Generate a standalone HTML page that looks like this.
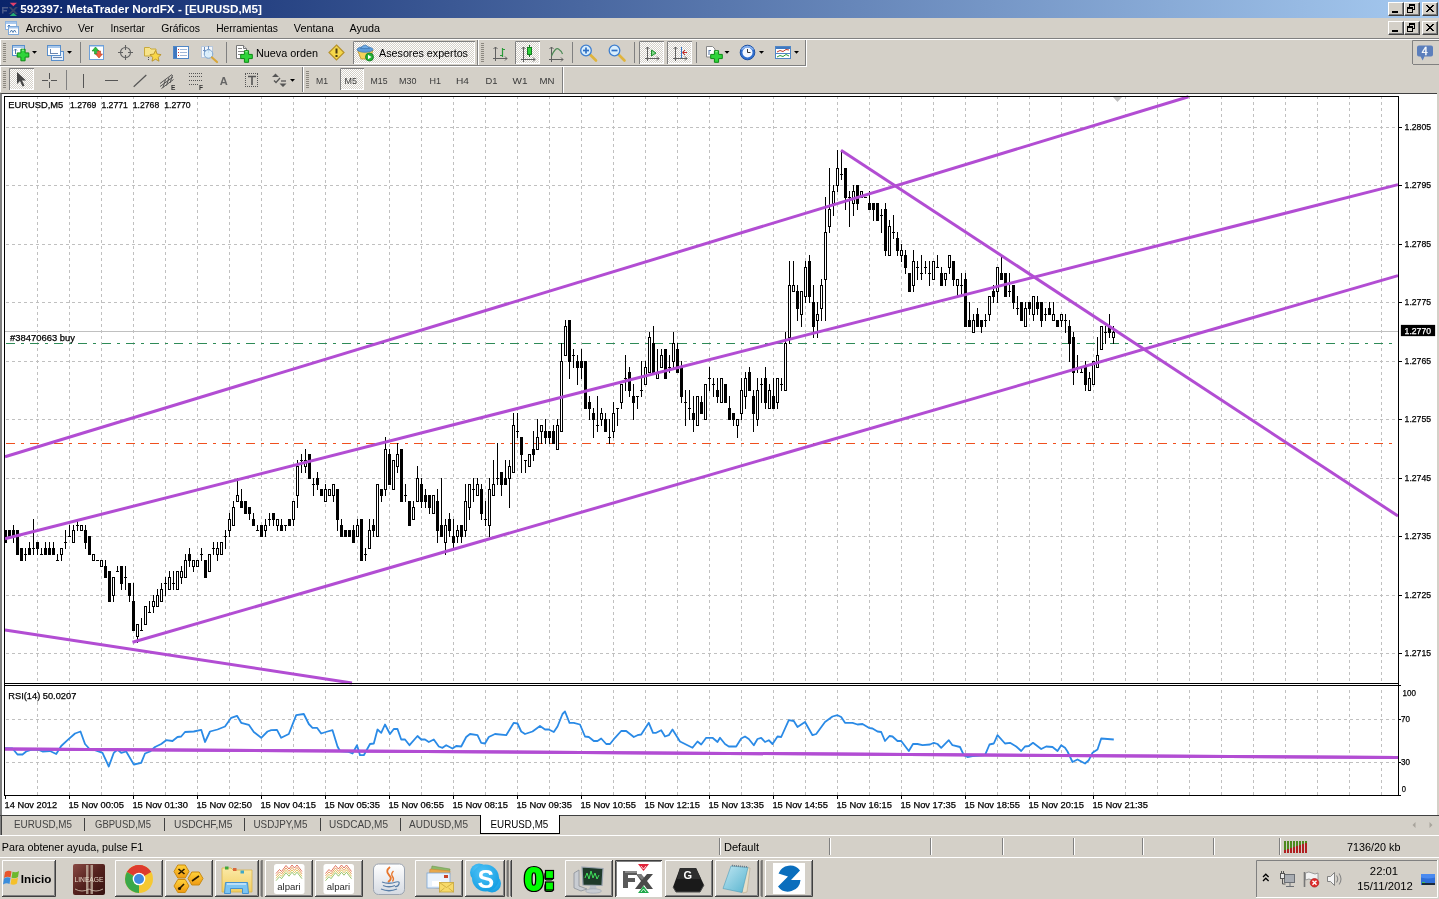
<!DOCTYPE html><html><head><meta charset="utf-8"><title>592397: MetaTrader NordFX - [EURUSD,M5]</title>
<style>

html,body{margin:0;padding:0;}
body{width:1439px;height:899px;overflow:hidden;background:#D4D0C8;font-family:"Liberation Sans",sans-serif;font-size:11px;color:#000;position:relative;}
.abs{position:absolute;}
.t{position:absolute;white-space:nowrap;line-height:1;}
#title{left:0;top:0;width:1439px;height:18px;background:linear-gradient(to right,#0A246A 0%,#A6CAF0 100%);}
#title .cap{left:20px;top:3px;color:#fff;font-weight:bold;font-size:12px;letter-spacing:0px;}
.wb{position:absolute;width:14px;height:12px;background:#D4D0C8;border:1px solid;border-color:#fff #404040 #404040 #fff;box-shadow:inset -1px -1px 0 #808080;}
.menu{top:22px;font-size:11px;}
.tb{position:absolute;border:1px solid;border-color:#fff #808080 #808080 #fff;}
.grip{position:absolute;width:3px;border-left:1px solid #fff;border-right:1px solid #808080;}
.sep{position:absolute;width:0;border-left:1px solid #808080;border-right:1px solid #fff;}
.pressed{position:absolute;border:1px solid;border-color:#808080 #fff #fff #808080;background-color:#ECEAE6;background-image:linear-gradient(45deg,#fff 25%,transparent 25%,transparent 75%,#fff 75%),linear-gradient(45deg,#fff 25%,transparent 25%,transparent 75%,#fff 75%);background-size:2px 2px;background-position:0 0,1px 1px;}
.tf{top:75px;font-size:10px;color:#333;}
.tab{top:818px;font-size:11px;color:#222;}
.tsep{position:absolute;top:818px;width:1px;height:13px;background:#404040;}
.sb{top:841px;font-size:11px;}
.ssep{position:absolute;top:838px;width:0;height:17px;border-left:1px solid #808080;border-right:1px solid #fff;}
.tbtn{position:absolute;top:860px;height:35px;border:1px solid;border-color:#fff #404040 #404040 #fff;box-shadow:inset -1px -1px 0 #808080;background:#D4D0C8;}
svg{position:absolute;left:0;top:0;overflow:visible;}
svg text{font-family:"Liberation Sans",sans-serif;}

</style></head><body><div id="wrap" style="position:absolute;left:0;top:0;width:1439px;height:899px;will-change:transform">
<div id="title" class="abs">
<svg width="1439" height="899" viewBox="0 0 1439 899"><g><path d="M2 7h6v1.500h-4.500v1.500h3.500v1.500h-3.500v2h-1.500z" fill="#4A5A8A"/><path d="M8.500 7h2.500l2.200 2.300 2.200-2.300h2.500l-3.400 3.500 3.400 3.500h-2.500l-2.200-2.300-2.200 2.300h-2.500l3.400-3.500z" fill="#3A4668"/><path d="M9.700 2.800h7.300l-3.650 3.400z" fill="#E0406A"/><path d="M9.700 16h7.300l-3.650-3.200z" fill="#28B070"/></g></svg>
<svg width="1439" height="19"><text x="20.2" y="13" font-size="11" textLength="241.8" lengthAdjust="spacingAndGlyphs" font-weight="bold" fill="#fff">592397: MetaTrader NordFX - [EURUSD,M5]</text></svg>
<div class="wb" style="left:1388px;top:2px"><div style="position:absolute;left:3px;top:8px;width:6px;height:2px;background:#000"></div></div>
<div class="wb" style="left:1404px;top:2px"><div style="position:absolute;left:4px;top:1px;width:4px;height:3px;border:1px solid #000;border-top-width:2px"></div><div style="position:absolute;left:2px;top:4px;width:4px;height:3px;border:1px solid #000;border-top-width:2px;background:#D4D0C8"></div></div>
<div class="wb" style="left:1422px;top:2px"><svg width="14" height="12" style="left:0;top:0"><path d="M3 2l7 7M4 2l7 7M10 2l-7 7M11 2l-7 7" stroke="#000" stroke-width="1" fill="none" shape-rendering="crispEdges"/></svg></div>
</div>
<svg width="1439" height="899" viewBox="0 0 1439 899"><g><rect x="5.500" y="21.500" width="11" height="8" fill="#fff" stroke="#8DB4E0"/><rect x="6" y="22" width="10" height="2" fill="#A9C8EC"/><path d="M7.500 26.500l1.500-1.500 1.500 1.500" stroke="#4A7EBB" fill="none"/><rect x="8.500" y="26.500" width="10" height="8" fill="#fff" stroke="#7BA7D9"/><rect x="9" y="27" width="9" height="1.500" fill="#A9C8EC"/><path d="M10 32.500l1.500-2.500 1.500 2.500 1.500-2.500 1.500 2.500" stroke="#3C6EA8" fill="none" stroke-width=".9"/></g></svg>
<svg width="1439" height="899"><text x="25.8" y="32" font-size="11" textLength="36.2" lengthAdjust="spacingAndGlyphs">Archivo</text><text x="78" y="32" font-size="11" textLength="15.8" lengthAdjust="spacingAndGlyphs">Ver</text><text x="110.5" y="32" font-size="11" textLength="34.5" lengthAdjust="spacingAndGlyphs">Insertar</text><text x="161.2" y="32" font-size="11" textLength="38.8" lengthAdjust="spacingAndGlyphs">Gráficos</text><text x="216.2" y="32" font-size="11" textLength="61.8" lengthAdjust="spacingAndGlyphs">Herramientas</text><text x="293.8" y="32" font-size="11" textLength="40" lengthAdjust="spacingAndGlyphs">Ventana</text><text x="349.5" y="32" font-size="11" textLength="30.5" lengthAdjust="spacingAndGlyphs">Ayuda</text></svg>
<div class="wb" style="left:1388px;top:21px"><div style="position:absolute;left:3px;top:8px;width:6px;height:2px;background:#000"></div></div>
<div class="wb" style="left:1404px;top:21px"><div style="position:absolute;left:4px;top:1px;width:4px;height:3px;border:1px solid #000;border-top-width:2px"></div><div style="position:absolute;left:2px;top:4px;width:4px;height:3px;border:1px solid #000;border-top-width:2px;background:#D4D0C8"></div></div>
<div class="wb" style="left:1422px;top:21px"><svg width="14" height="12" style="left:0;top:0"><path d="M3 2l7 7M4 2l7 7M10 2l-7 7M11 2l-7 7" stroke="#000" stroke-width="1" fill="none" shape-rendering="crispEdges"/></svg></div>
<div class="abs" style="left:0;top:38px;width:1439px;height:1px;background:#808080"></div>
<div class="abs" style="left:0;top:39px;width:1439px;height:1px;background:#fff"></div>
<div class="abs" style="left:0;top:65px;width:806px;height:1px;background:#808080"></div>
<div class="abs" style="left:0;top:66px;width:807px;height:1px;background:#fff"></div>
<div class="abs" style="left:805px;top:40px;width:1px;height:26px;background:#808080"></div>
<div class="abs" style="left:806px;top:40px;width:1px;height:27px;background:#fff"></div>
<div class="abs" style="left:0;top:40px;width:1px;height:25px;background:#fff"></div>
<svg width="1439" height="899" viewBox="0 0 1439 899"><defs><pattern id="chk" width="2" height="2" patternUnits="userSpaceOnUse"><rect width="2" height="2" fill="#D4D0C8"/><rect width="1" height="1" fill="#fff"/><rect x="1" y="1" width="1" height="1" fill="#fff"/></pattern></defs><rect x="3" y="43" width="3" height="1" fill="#8C8880"/><rect x="3" y="45" width="3" height="1" fill="#8C8880"/><rect x="3" y="47" width="3" height="1" fill="#8C8880"/><rect x="3" y="49" width="3" height="1" fill="#8C8880"/><rect x="3" y="51" width="3" height="1" fill="#8C8880"/><rect x="3" y="53" width="3" height="1" fill="#8C8880"/><rect x="3" y="55" width="3" height="1" fill="#8C8880"/><rect x="3" y="57" width="3" height="1" fill="#8C8880"/><rect x="3" y="59" width="3" height="1" fill="#8C8880"/><rect x="3" y="61" width="3" height="1" fill="#8C8880"/><rect x="12.5" y="45.5" width="12" height="10" fill="#fff" stroke="#5A8FCB"/><rect x="13" y="46" width="11" height="2" fill="#A9C8EC"/><path d="M15.5 49v5M14 50.5l1.500-1.5 1.5 1.5" stroke="#5577AA" fill="none"/><path d="M20.9 49.2h4.2v3.6999999999999997h3.6999999999999997v4.2h-3.6999999999999997v3.6999999999999997h-4.2v-3.6999999999999997h-3.6999999999999997v-4.2h3.6999999999999997z" fill="#2FD43A" stroke="#0B8A14" stroke-width="1"/><path d="M21.9 50.2h2.2" stroke="#A6F5A8" stroke-width="1"/><path d="M32 51h5l-2.5 2.800z" fill="#000"/><rect x="51.5" y="51.5" width="12" height="9" fill="#E6F0FB" stroke="#5A8FCB"/><rect x="47.5" y="45.5" width="13" height="10" fill="#fff" stroke="#5A8FCB"/><rect x="48" y="46" width="12" height="2" fill="#A9C8EC"/><path d="M50.5 49v5M50 53.500h8M53 57.500h9" stroke="#6A86B0" fill="none"/><path d="M67 51h5l-2.5 2.800z" fill="#000"/><path d="M80.5 42V63" stroke="#808080"/><rect x="89.5" y="45.5" width="14" height="14" fill="#fff" stroke="#6FA0D8"/><rect x="90" y="46" width="13" height="1" fill="#B7D3F2"/><path d="M94.500 54v-3h-2.500l3.500-4 3.500 4h-2.500v3z" fill="#2DBE3C" stroke="#178A22" stroke-width=".6"/><path d="M97.500 51v3h-2l3.500 4 3.500-4h-2v-3z" fill="#F0603C" stroke="#B83A1E" stroke-width=".6"/><circle cx="125.500" cy="52.500" r="5" fill="none" stroke="#606060" stroke-width="1.1"/><path d="M125.500 45v5M125.500 55v5M118 52.500h5M128 52.500h5" stroke="#606060" stroke-width="1.1"/><path d="M144.500 47.500h5l1.500 1.500h5v7h-11.500z" fill="#F7E38A" stroke="#C9A93A"/><path d="M148.500 57v3" stroke="#555" stroke-dasharray="1 1"/><path d="M155.500 50.500l1.700 3.600 3.900.5-2.900 2.700.8 3.900-3.500-2-3.500 2 .8-3.900-2.900-2.700 3.900-.5z" fill="#F9D648" stroke="#B8922A" stroke-width=".9"/><rect x="173.500" y="46.500" width="15" height="12" fill="#fff" stroke="#4F86C6"/><rect x="174" y="47" width="3" height="11" fill="#3F78C0"/><path d="M178 49.500h1M178 52.500h1M178 55.500h1" stroke="#D03030"/><path d="M180 49.500h7M180 52.500h7M180 55.500h7" stroke="#9FB7D8"/><rect x="201.500" y="46.500" width="11" height="11" fill="#F4F8FD" stroke="#B8C8DC"/><path d="M204.500 47v8M208.500 46v7M203 50.500h3M207 49.500h3" stroke="#6C8FC0"/><circle cx="208.500" cy="54" r="4.300" fill="#D6ECFA" fill-opacity=".85" stroke="#7FA6CF"/><path d="M212 57.500l5 4.500" stroke="#D9A73A" stroke-width="2.200" stroke-linecap="round"/><path d="M226.5 42V63" stroke="#808080"/><path d="M236.500 45.500h7l3 3v10h-10z" fill="#fff" stroke="#777"/><path d="M243.500 45.500v3h3" fill="#ddd" stroke="#777"/><path d="M238 48.500h4M238 51.500h6M238 54.500h4" stroke="#888"/><path d="M244.4 50.7h4.2v3.6999999999999997h3.6999999999999997v4.2h-3.6999999999999997v3.6999999999999997h-4.2v-3.6999999999999997h-3.6999999999999997v-4.2h3.6999999999999997z" fill="#2FD43A" stroke="#0B8A14" stroke-width="1"/><path d="M245.4 51.7h2.2" stroke="#A6F5A8" stroke-width="1"/><text x="256" y="56.500" font-size="11" fill="#000" textLength="62" lengthAdjust="spacingAndGlyphs">Nueva orden</text><path d="M336.500 45l7.500 7.500-7.500 7.500-7.500-7.500z" fill="#F5D84A" stroke="#B8922A" stroke-width="1.200"/><path d="M336.500 48.500v5" stroke="#4A3A10" stroke-width="2"/><rect x="335.500" y="55" width="2" height="2" fill="#4A3A10"/><rect x="353" y="41" width="122" height="23" fill="url(#chk)"/><path d="M353.5 64V41.5H475" stroke="#808080" fill="none"/><path d="M474.5 42V63.5H354" stroke="#fff" fill="none"/><path d="M357.500 50l3.500 9h9l3-9z" fill="#F4D25A" stroke="#B98F2B" stroke-width=".8"/><ellipse cx="365" cy="49.500" rx="8" ry="2.800" fill="#5C9BD9" stroke="#3A72B0" stroke-width=".7"/><path d="M360.500 48.500q4.500-7 9 0z" fill="#6FAAE2" stroke="#3A72B0" stroke-width=".7"/><circle cx="369.500" cy="57" r="4" fill="#22B033" stroke="#13761F" stroke-width=".8"/><path d="M368 54.800l3.500 2.200-3.500 2.200z" fill="#fff"/><text x="379" y="56.500" font-size="11" fill="#000" textLength="89" lengthAdjust="spacingAndGlyphs">Asesores expertos</text><path d="M477.5 40V65" stroke="#808080"/><path d="M478.5 40V65" stroke="#fff"/><rect x="481" y="43" width="3" height="1" fill="#8C8880"/><rect x="481" y="45" width="3" height="1" fill="#8C8880"/><rect x="481" y="47" width="3" height="1" fill="#8C8880"/><rect x="481" y="49" width="3" height="1" fill="#8C8880"/><rect x="481" y="51" width="3" height="1" fill="#8C8880"/><rect x="481" y="53" width="3" height="1" fill="#8C8880"/><rect x="481" y="55" width="3" height="1" fill="#8C8880"/><rect x="481" y="57" width="3" height="1" fill="#8C8880"/><rect x="481" y="59" width="3" height="1" fill="#8C8880"/><rect x="481" y="61" width="3" height="1" fill="#8C8880"/><path d="M495.5 47V61M493 58.5H507" stroke="#606060" fill="none"/><path d="M493.5 49L495.5 47L497.5 49" stroke="#606060" fill="none"/><path d="M505 56.5L507 58.5L505 60.5" stroke="#606060" fill="none"/><path d="M502.500 48v9M500 55.500h2M503 49.500h2" stroke="#2A9A3A" stroke-width="1.200"/><rect x="515" y="41" width="25" height="23" fill="url(#chk)"/><path d="M515.5 64V41.5H540" stroke="#808080" fill="none"/><path d="M539.5 42V63.5H516" stroke="#fff" fill="none"/><path d="M523.5 47V62M521 59.5H535" stroke="#606060" fill="none"/><path d="M521.5 49L523.5 47L525.5 49" stroke="#606060" fill="none"/><path d="M533 57.5L535 59.5L533 61.5" stroke="#606060" fill="none"/><path d="M529.500 45v12" stroke="#167A22"/><rect x="527.500" y="47.500" width="4" height="7" fill="#2FD43A" stroke="#167A22"/><path d="M551.5 47V62M549 59.5H563" stroke="#606060" fill="none"/><path d="M549.5 49L551.5 47L553.5 49" stroke="#606060" fill="none"/><path d="M561 57.5L563 59.5L561 61.5" stroke="#606060" fill="none"/><path d="M551.500 56q4-9 7-7t4 5" stroke="#4C8A55" stroke-width="1.200" fill="none"/><path d="M572.5 42V63" stroke="#808080"/><path d="M590 54.5l6 6" stroke="#E0B43C" stroke-width="2.600" stroke-linecap="round"/><circle cx="586" cy="50.500" r="5.300" fill="#D9EEFC" stroke="#3F7FCF" stroke-width="1.300"/><path d="M583 50.500h6" stroke="#2E6FC4" stroke-width="1.700"/><path d="M586 47.500v6" stroke="#2E6FC4" stroke-width="1.700"/><path d="M618.5 54.5l6 6" stroke="#E0B43C" stroke-width="2.600" stroke-linecap="round"/><circle cx="614.5" cy="50.500" r="5.300" fill="#D9EEFC" stroke="#3F7FCF" stroke-width="1.300"/><path d="M611.5 50.500h6" stroke="#2E6FC4" stroke-width="1.700"/><path d="M634.5 42V63" stroke="#808080"/><rect x="639" y="41" width="25" height="23" fill="url(#chk)"/><path d="M639.5 64V41.5H664" stroke="#808080" fill="none"/><path d="M663.5 42V63.5H640" stroke="#fff" fill="none"/><path d="M647.5 47V61M645 58.5H659" stroke="#606060" fill="none"/><path d="M645.5 49L647.5 47L649.5 49" stroke="#606060" fill="none"/><path d="M657 56.5L659 58.5L657 60.5" stroke="#606060" fill="none"/><path d="M651.500 50l4.500 3-4.500 3z" fill="#7ADB84" stroke="#1E8E2C"/><rect x="667" y="41" width="25" height="23" fill="url(#chk)"/><path d="M667.5 64V41.5H692" stroke="#808080" fill="none"/><path d="M691.5 42V63.5H668" stroke="#fff" fill="none"/><path d="M675.5 47V61M673 58.5H687" stroke="#606060" fill="none"/><path d="M673.5 49L675.5 47L677.5 49" stroke="#606060" fill="none"/><path d="M685 56.5L687 58.5L685 60.5" stroke="#606060" fill="none"/><path d="M681.500 47v11" stroke="#3A78C8"/><path d="M687 52.500h-4M685 50l-2.500 2.500 2.500 2.500" stroke="#C82A2A" fill="none"/><path d="M696.5 42V63" stroke="#808080"/><path d="M706.500 46.500h6l2.500 2.500v8h-8.500z" fill="#fff" stroke="#888"/><path d="M709 50.500h2M709 50v5" stroke="#5577AA"/><path d="M714.4 50.7h4.2v3.6999999999999997h3.6999999999999997v4.2h-3.6999999999999997v3.6999999999999997h-4.2v-3.6999999999999997h-3.6999999999999997v-4.2h3.6999999999999997z" fill="#2FD43A" stroke="#0B8A14" stroke-width="1"/><path d="M715.4 51.7h2.2" stroke="#A6F5A8" stroke-width="1"/><path d="M724.5 51h5l-2.5 2.800z" fill="#000"/><circle cx="747.500" cy="52.500" r="7.300" fill="#2F6FD0" stroke="#1E4FA0"/><circle cx="747.500" cy="52.500" r="5" fill="#F4F8FF"/><path d="M747.500 49v3.500h3" stroke="#333" fill="none"/><path d="M741.500 49.500q6-6 12 0" stroke="#8DB6F0" fill="none" stroke-width="1.500"/><path d="M759 51h5l-2.5 2.800z" fill="#000"/><rect x="775.500" y="46.500" width="15" height="12" fill="#fff" stroke="#4F86C6"/><rect x="776" y="47" width="14" height="2" fill="#3F78C0"/><path d="M776 53.500h14" stroke="#4F86C6"/><path d="M777 52l3-1.500 3 1 3-2 3 .5" stroke="#C03A2A" fill="none"/><path d="M777 57l3-1.500 3 1 3-2 3 1.500" stroke="#2A9A3A" fill="none"/><path d="M794 51h5l-2.5 2.800z" fill="#000"/></svg>
<div class="abs" style="left:562px;top:67px;width:1px;height:26px;background:#808080"></div>
<div class="abs" style="left:563px;top:67px;width:1px;height:26px;background:#fff"></div>
<div class="abs" style="left:0;top:67px;width:1px;height:25px;background:#fff"></div>
<svg width="1439" height="899" viewBox="0 0 1439 899"><rect x="3" y="71" width="3" height="1" fill="#8C8880"/><rect x="3" y="73" width="3" height="1" fill="#8C8880"/><rect x="3" y="75" width="3" height="1" fill="#8C8880"/><rect x="3" y="77" width="3" height="1" fill="#8C8880"/><rect x="3" y="79" width="3" height="1" fill="#8C8880"/><rect x="3" y="81" width="3" height="1" fill="#8C8880"/><rect x="3" y="83" width="3" height="1" fill="#8C8880"/><rect x="3" y="85" width="3" height="1" fill="#8C8880"/><rect x="3" y="87" width="3" height="1" fill="#8C8880"/><rect x="9" y="68" width="25" height="22" fill="url(#chk)"/><path d="M9.5 90V68.5H34" stroke="#808080" fill="none"/><path d="M33.5 69V89.5H10" stroke="#fff" fill="none"/><path d="M17 72v12l3-3 2.500 5.500 2-1-2.500-5h4z" fill="#444"/><path d="M49.500 73v6M49.500 82v6M42 80.500h6M51 80.500h6" stroke="#555"/><path d="M66.5 70V90" stroke="#808080"/><path d="M83.500 74v14" stroke="#555"/><path d="M105 80.500h13" stroke="#555"/><path d="M133.700 86.800L146.300 75" stroke="#555" stroke-width="1.200"/><path d="M160 83.500l12-9M160 86.500l13-9.500M161.500 88.500l12-9" stroke="#555" stroke-width="1" fill="none"/><path d="M163 87.500l2.500-8M166.500 85.500l2.500-8M170 83l2.500-8" stroke="#555" stroke-width="1" fill="none"/><text x="171" y="89.500" font-size="6.500" font-weight="bold" fill="#333">E</text><path d="M189 73.500h13M189 76.500h13M189 80.500h13M189 84.500h9" stroke="#555" stroke-dasharray="1 1" shape-rendering="crispEdges"/><text x="199" y="89.500" font-size="6.500" font-weight="bold" fill="#333">F</text><text x="219.800" y="84.500" font-size="11" font-weight="bold" fill="#666" textLength="8" lengthAdjust="spacingAndGlyphs">A</text><path d="M245 73.500h13M245 86.500h13M245.500 74v13M257.500 74v13" stroke="#555" stroke-dasharray="1 1" shape-rendering="crispEdges" fill="none"/><path d="M248 76.500h8M252 76v9" stroke="#555" stroke-width="1.600"/><path d="M272 77l3.500-3.500 3.500 3.500z M279.500 83.500l3.500 3.500 3.500-3.500z" fill="#555"/><path d="M274 80.500l2 2 4-4.500" stroke="#555" fill="none" stroke-width="1.300"/><path d="M281 81h5" stroke="#555" stroke-width="1.300"/><path d="M290 79h5l-2.5 2.800z" fill="#000"/><path d="M302.5 67V92" stroke="#808080"/><path d="M303.5 67V92" stroke="#fff"/><rect x="306" y="71" width="3" height="1" fill="#8C8880"/><rect x="306" y="73" width="3" height="1" fill="#8C8880"/><rect x="306" y="75" width="3" height="1" fill="#8C8880"/><rect x="306" y="77" width="3" height="1" fill="#8C8880"/><rect x="306" y="79" width="3" height="1" fill="#8C8880"/><rect x="306" y="81" width="3" height="1" fill="#8C8880"/><rect x="306" y="83" width="3" height="1" fill="#8C8880"/><rect x="306" y="85" width="3" height="1" fill="#8C8880"/><rect x="306" y="87" width="3" height="1" fill="#8C8880"/><rect x="340" y="68" width="24" height="22" fill="url(#chk)"/><path d="M340.5 90V68.5H364" stroke="#808080" fill="none"/><path d="M363.5 69V89.5H341" stroke="#fff" fill="none"/><text x="316" y="84" font-size="9.800" fill="#3A3A3A" textLength="12" lengthAdjust="spacingAndGlyphs">M1</text><text x="344.5" y="84" font-size="9.800" fill="#3A3A3A" textLength="12.5" lengthAdjust="spacingAndGlyphs">M5</text><text x="370.5" y="84" font-size="9.800" fill="#3A3A3A" textLength="17" lengthAdjust="spacingAndGlyphs">M15</text><text x="399" y="84" font-size="9.800" fill="#3A3A3A" textLength="17.5" lengthAdjust="spacingAndGlyphs">M30</text><text x="429.5" y="84" font-size="9.800" fill="#3A3A3A" textLength="11.5" lengthAdjust="spacingAndGlyphs">H1</text><text x="456" y="84" font-size="9.800" fill="#3A3A3A" textLength="13" lengthAdjust="spacingAndGlyphs">H4</text><text x="485.5" y="84" font-size="9.800" fill="#3A3A3A" textLength="12" lengthAdjust="spacingAndGlyphs">D1</text><text x="512.5" y="84" font-size="9.800" fill="#3A3A3A" textLength="15" lengthAdjust="spacingAndGlyphs">W1</text><text x="539.5" y="84" font-size="9.800" fill="#3A3A3A" textLength="15" lengthAdjust="spacingAndGlyphs">MN</text></svg>
<svg width="1439" height="899" viewBox="0 0 1439 899"><path d="M1412.500 64V40.500H1439" stroke="#808080" fill="none"/><path d="M1413 64.500H1439" stroke="#808080" fill="none"/><path d="M1419 45.500h12q2 0 2 2v7q0 2-2 2h-6.500l-1.800 4-2.200-4h-1.500q-2 0-2-2v-7q0-2 2-2z" fill="#5C7FBC"/><text x="1421.800" y="55" font-size="10.500" fill="#fff" stroke="#fff" stroke-width=".35">4</text></svg>
<div class="abs" style="left:0;top:93px;width:1437px;height:722px;background:#fff;border-top:1px solid #404040;border-left:2px solid #808080;box-sizing:border-box"></div>
<svg width="1439" height="899" viewBox="0 0 1439 899">
<g shape-rendering="crispEdges" stroke="#C0C0C0" stroke-width="1" stroke-dasharray="3 3" fill="none">
<path d="M37.5 97V683" stroke-dashoffset="1"/><path d="M37.5 687V795" stroke-dashoffset="3"/>
<path d="M69.5 97V683" stroke-dashoffset="1"/><path d="M69.5 687V795" stroke-dashoffset="3"/>
<path d="M101.5 97V683" stroke-dashoffset="1"/><path d="M101.5 687V795" stroke-dashoffset="3"/>
<path d="M133.5 97V683" stroke-dashoffset="1"/><path d="M133.5 687V795" stroke-dashoffset="3"/>
<path d="M165.5 97V683" stroke-dashoffset="1"/><path d="M165.5 687V795" stroke-dashoffset="3"/>
<path d="M197.5 97V683" stroke-dashoffset="1"/><path d="M197.5 687V795" stroke-dashoffset="3"/>
<path d="M229.5 97V683" stroke-dashoffset="1"/><path d="M229.5 687V795" stroke-dashoffset="3"/>
<path d="M261.5 97V683" stroke-dashoffset="1"/><path d="M261.5 687V795" stroke-dashoffset="3"/>
<path d="M293.5 97V683" stroke-dashoffset="1"/><path d="M293.5 687V795" stroke-dashoffset="3"/>
<path d="M325.5 97V683" stroke-dashoffset="1"/><path d="M325.5 687V795" stroke-dashoffset="3"/>
<path d="M357.5 97V683" stroke-dashoffset="1"/><path d="M357.5 687V795" stroke-dashoffset="3"/>
<path d="M389.5 97V683" stroke-dashoffset="1"/><path d="M389.5 687V795" stroke-dashoffset="3"/>
<path d="M421.5 97V683" stroke-dashoffset="1"/><path d="M421.5 687V795" stroke-dashoffset="3"/>
<path d="M453.5 97V683" stroke-dashoffset="1"/><path d="M453.5 687V795" stroke-dashoffset="3"/>
<path d="M485.5 97V683" stroke-dashoffset="1"/><path d="M485.5 687V795" stroke-dashoffset="3"/>
<path d="M517.5 97V683" stroke-dashoffset="1"/><path d="M517.5 687V795" stroke-dashoffset="3"/>
<path d="M549.5 97V683" stroke-dashoffset="1"/><path d="M549.5 687V795" stroke-dashoffset="3"/>
<path d="M581.5 97V683" stroke-dashoffset="1"/><path d="M581.5 687V795" stroke-dashoffset="3"/>
<path d="M613.5 97V683" stroke-dashoffset="1"/><path d="M613.5 687V795" stroke-dashoffset="3"/>
<path d="M645.5 97V683" stroke-dashoffset="1"/><path d="M645.5 687V795" stroke-dashoffset="3"/>
<path d="M677.5 97V683" stroke-dashoffset="1"/><path d="M677.5 687V795" stroke-dashoffset="3"/>
<path d="M709.5 97V683" stroke-dashoffset="1"/><path d="M709.5 687V795" stroke-dashoffset="3"/>
<path d="M741.5 97V683" stroke-dashoffset="1"/><path d="M741.5 687V795" stroke-dashoffset="3"/>
<path d="M773.5 97V683" stroke-dashoffset="1"/><path d="M773.5 687V795" stroke-dashoffset="3"/>
<path d="M805.5 97V683" stroke-dashoffset="1"/><path d="M805.5 687V795" stroke-dashoffset="3"/>
<path d="M837.5 97V683" stroke-dashoffset="1"/><path d="M837.5 687V795" stroke-dashoffset="3"/>
<path d="M869.5 97V683" stroke-dashoffset="1"/><path d="M869.5 687V795" stroke-dashoffset="3"/>
<path d="M901.5 97V683" stroke-dashoffset="1"/><path d="M901.5 687V795" stroke-dashoffset="3"/>
<path d="M933.5 97V683" stroke-dashoffset="1"/><path d="M933.5 687V795" stroke-dashoffset="3"/>
<path d="M965.5 97V683" stroke-dashoffset="1"/><path d="M965.5 687V795" stroke-dashoffset="3"/>
<path d="M997.5 97V683" stroke-dashoffset="1"/><path d="M997.5 687V795" stroke-dashoffset="3"/>
<path d="M1029.5 97V683" stroke-dashoffset="1"/><path d="M1029.5 687V795" stroke-dashoffset="3"/>
<path d="M1061.5 97V683" stroke-dashoffset="1"/><path d="M1061.5 687V795" stroke-dashoffset="3"/>
<path d="M1093.5 97V683" stroke-dashoffset="1"/><path d="M1093.5 687V795" stroke-dashoffset="3"/>
<path d="M1125.5 97V683" stroke-dashoffset="1"/><path d="M1125.5 687V795" stroke-dashoffset="3"/>
<path d="M1157.5 97V683" stroke-dashoffset="1"/><path d="M1157.5 687V795" stroke-dashoffset="3"/>
<path d="M1189.5 97V683" stroke-dashoffset="1"/><path d="M1189.5 687V795" stroke-dashoffset="3"/>
<path d="M1221.5 97V683" stroke-dashoffset="1"/><path d="M1221.5 687V795" stroke-dashoffset="3"/>
<path d="M1253.5 97V683" stroke-dashoffset="1"/><path d="M1253.5 687V795" stroke-dashoffset="3"/>
<path d="M1285.5 97V683" stroke-dashoffset="1"/><path d="M1285.5 687V795" stroke-dashoffset="3"/>
<path d="M1317.5 97V683" stroke-dashoffset="1"/><path d="M1317.5 687V795" stroke-dashoffset="3"/>
<path d="M1349.5 97V683" stroke-dashoffset="1"/><path d="M1349.5 687V795" stroke-dashoffset="3"/>
<path d="M1381.5 97V683" stroke-dashoffset="1"/><path d="M1381.5 687V795" stroke-dashoffset="3"/>
<path d="M5 127.5H1398" stroke-dashoffset="5"/>
<path d="M5 185.5H1398" stroke-dashoffset="5"/>
<path d="M5 244.5H1398" stroke-dashoffset="5"/>
<path d="M5 302.5H1398" stroke-dashoffset="5"/>
<path d="M5 361.5H1398" stroke-dashoffset="5"/>
<path d="M5 419.5H1398" stroke-dashoffset="5"/>
<path d="M5 478.5H1398" stroke-dashoffset="5"/>
<path d="M5 536.5H1398" stroke-dashoffset="5"/>
<path d="M5 595.5H1398" stroke-dashoffset="5"/>
<path d="M5 653.5H1398" stroke-dashoffset="5"/>
<path d="M5 719.5H1398" stroke-dashoffset="5"/>
<path d="M5 762.5H1398" stroke-dashoffset="5"/>
</g>
<g shape-rendering="crispEdges" fill="none">
<path d="M5 331.5H1398" stroke="#C0C0C0"/>
<path d="M6 343.5H1393" stroke="#2E8B57" stroke-dasharray="9 6 3 6"/>
<path d="M6 443.5H1393" stroke="#F0501E" stroke-dasharray="9 6 3 6"/>
</g>
<g shape-rendering="crispEdges">
<path fill="#000" d="M5 530h1V543h-1zM4 530h3V543h-3zM9 530h1V537h-1zM8 530h3V537h-3zM13 525h1V543h-1zM12 530h3V537h-3zM17 530h1V555h-1zM16 530h3V555h-3zM21 548h1V561h-1zM20 548h3V561h-3zM25 548h1V561h-1zM24 554h3v1h-3zM29 542h1V555h-1zM28 548h3V555h-3zM33 519h1V555h-1zM32 548h3v1h-3zM37 542h1V555h-1zM36 542h3V549h-3zM41 548h1V555h-1zM40 554h3v1h-3zM45 542h1V555h-1zM44 548h3V555h-3zM49 542h1V555h-1zM48 548h3V555h-3zM53 542h1V555h-1zM52 548h3V555h-3zM57 554h1V561h-1zM56 560h3v1h-3zM61 548h1V561h-1zM60 548h3V555h-3zM65 530h1V549h-1zM64 542h3v1h-3zM69 525h1V537h-1zM68 536h3v1h-3zM73 525h1V543h-1zM72 530h3V543h-3zM77 519h1V531h-1zM76 525h3v1h-3zM81 525h1V531h-1zM80 525h3V531h-3zM85 525h1V549h-1zM84 530h3V543h-3zM89 536h1V555h-1zM88 536h3V555h-3zM93 554h1V561h-1zM92 554h3V561h-3zM97 560h1V561h-1zM96 560h3v1h-3zM101 560h1V567h-1zM100 560h3V567h-3zM105 560h1V578h-1zM104 566h3V578h-3zM109 571h1V602h-1zM108 571h3V602h-3zM113 577h1V602h-1zM112 577h3V596h-3zM117 566h1V572h-1zM116 571h3v1h-3zM121 566h1V590h-1zM120 566h3V584h-3zM125 566h1V590h-1zM124 577h3v1h-3zM129 583h1V602h-1zM128 583h3V596h-3zM133 583h1V631h-1zM132 601h3V631h-3zM137 624h1V643h-1zM136 624h3V637h-3zM141 618h1V631h-1zM140 630h3v1h-3zM145 606h1V625h-1zM144 606h3V625h-3zM149 601h1V613h-1zM148 612h3v1h-3zM153 595h1V613h-1zM152 601h3V607h-3zM157 589h1V607h-1zM156 595h3V607h-3zM161 583h1V602h-1zM160 589h3V602h-3zM165 577h1V596h-1zM164 583h3v1h-3zM169 571h1V590h-1zM168 577h3V590h-3zM173 571h1V590h-1zM172 583h3v1h-3zM177 571h1V590h-1zM176 571h3V590h-3zM181 566h1V584h-1zM180 571h3V578h-3zM185 554h1V578h-1zM184 560h3V578h-3zM189 548h1V567h-1zM188 554h3V561h-3zM193 560h1V572h-1zM192 560h3V567h-3zM197 560h1V567h-1zM196 560h3V567h-3zM201 548h1V561h-1zM200 554h3v1h-3zM205 560h1V578h-1zM204 560h3V578h-3zM209 554h1V572h-1zM208 554h3V572h-3zM213 542h1V555h-1zM212 548h3v1h-3zM217 542h1V561h-1zM216 548h3V555h-3zM221 542h1V555h-1zM220 542h3V555h-3zM225 530h1V549h-1zM224 536h3v1h-3zM229 513h1V537h-1zM228 519h3V531h-3zM233 501h1V526h-1zM232 507h3V526h-3zM237 478h1V502h-1zM236 495h3V502h-3zM241 489h1V508h-1zM240 501h3V508h-3zM245 501h1V514h-1zM244 501h3V514h-3zM249 507h1V520h-1zM248 507h3V514h-3zM253 513h1V526h-1zM252 519h3V526h-3zM257 525h1V531h-1zM256 530h3v1h-3zM261 525h1V537h-1zM260 525h3V537h-3zM265 519h1V537h-1zM264 525h3V531h-3zM269 513h1V526h-1zM268 519h3v1h-3zM273 513h1V526h-1zM272 513h3V520h-3zM277 519h1V531h-1zM276 519h3V526h-3zM281 519h1V531h-1zM280 525h3V531h-3zM285 525h1V531h-1zM284 525h3v1h-3zM289 519h1V526h-1zM288 519h3V526h-3zM293 501h1V526h-1zM292 501h3V520h-3zM297 460h1V508h-1zM296 466h3V496h-3zM301 454h1V473h-1zM300 460h3v1h-3zM305 449h1V473h-1zM304 460h3V467h-3zM309 454h1V479h-1zM308 454h3V479h-3zM313 478h1V496h-1zM312 484h3v1h-3zM317 472h1V490h-1zM316 478h3V485h-3zM321 489h1V496h-1zM320 489h3V496h-3zM325 484h1V502h-1zM324 489h3V502h-3zM329 489h1V496h-1zM328 489h3V496h-3zM333 484h1V502h-1zM332 484h3V496h-3zM337 489h1V531h-1zM336 489h3V520h-3zM341 519h1V537h-1zM340 525h3V537h-3zM345 530h1V537h-1zM344 530h3V537h-3zM349 530h1V537h-1zM348 530h3V537h-3zM353 525h1V543h-1zM352 530h3V543h-3zM357 519h1V537h-1zM356 525h3V537h-3zM361 519h1V561h-1zM360 519h3V561h-3zM365 548h1V561h-1zM364 554h3v1h-3zM369 519h1V549h-1zM368 530h3V549h-3zM373 519h1V537h-1zM372 525h3V531h-3zM377 484h1V537h-1zM376 484h3V537h-3zM381 489h1V502h-1zM380 489h3V496h-3zM385 437h1V496h-1zM384 449h3V490h-3zM389 449h1V485h-1zM388 454h3V485h-3zM393 460h1V490h-1zM392 460h3V490h-3zM397 443h1V473h-1zM396 454h3V467h-3zM401 449h1V502h-1zM400 449h3V502h-3zM405 484h1V502h-1zM404 495h3v1h-3zM409 501h1V526h-1zM408 501h3V526h-3zM413 501h1V520h-1zM412 507h3V520h-3zM417 466h1V502h-1zM416 478h3V502h-3zM421 478h1V508h-1zM420 484h3V502h-3zM425 489h1V508h-1zM424 495h3V502h-3zM429 495h1V514h-1zM428 495h3V508h-3zM433 495h1V514h-1zM432 495h3V514h-3zM437 489h1V543h-1zM436 501h3V531h-3zM441 478h1V537h-1zM440 525h3V537h-3zM445 519h1V555h-1zM444 525h3V543h-3zM449 513h1V537h-1zM448 519h3V531h-3zM453 519h1V549h-1zM452 536h3V543h-3zM457 525h1V543h-1zM456 530h3V537h-3zM461 525h1V543h-1zM460 525h3V537h-3zM465 484h1V537h-1zM464 501h3V531h-3zM469 484h1V520h-1zM468 484h3V508h-3zM473 478h1V502h-1zM472 489h3v1h-3zM477 478h1V496h-1zM476 484h3V496h-3zM481 484h1V520h-1zM480 489h3V514h-3zM485 501h1V526h-1zM484 519h3v1h-3zM489 478h1V537h-1zM488 489h3V526h-3zM493 460h1V496h-1zM492 484h3V496h-3zM497 443h1V485h-1zM496 478h3v1h-3zM501 472h1V496h-1zM500 472h3V485h-3zM505 460h1V485h-1zM504 478h3V485h-3zM509 460h1V508h-1zM508 466h3V479h-3zM513 413h1V473h-1zM512 425h3V473h-3zM517 413h1V438h-1zM516 431h3v1h-3zM521 437h1V473h-1zM520 437h3V455h-3zM525 460h1V473h-1zM524 460h3v1h-3zM529 454h1V467h-1zM528 454h3V467h-3zM533 431h1V461h-1zM532 449h3V455h-3zM537 419h1V450h-1zM536 437h3V450h-3zM541 425h1V444h-1zM540 425h3V432h-3zM545 419h1V444h-1zM544 431h3V438h-3zM549 431h1V444h-1zM548 431h3V438h-3zM553 425h1V444h-1zM552 431h3V444h-3zM557 419h1V450h-1zM556 425h3V450h-3zM561 343h1V432h-1zM560 361h3V432h-3zM565 320h1V356h-1zM564 326h3V356h-3zM569 320h1V379h-1zM568 320h3V362h-3zM573 349h1V368h-1zM572 355h3v1h-3zM577 355h1V385h-1zM576 361h3V368h-3zM581 349h1V379h-1zM580 361h3V368h-3zM585 361h1V409h-1zM584 361h3V409h-3zM589 396h1V420h-1zM588 402h3V409h-3zM593 408h1V438h-1zM592 413h3V420h-3zM597 396h1V432h-1zM596 425h3v1h-3zM601 408h1V426h-1zM600 413h3V420h-3zM605 413h1V432h-1zM604 419h3V432h-3zM609 419h1V444h-1zM608 437h3v1h-3zM613 402h1V438h-1zM612 413h3V432h-3zM617 408h1V426h-1zM616 408h3v1h-3zM621 384h1V409h-1zM620 384h3V403h-3zM625 355h1V391h-1zM624 378h3v1h-3zM629 367h1V397h-1zM628 372h3V391h-3zM633 384h1V420h-1zM632 396h3V403h-3zM637 396h1V409h-1zM636 396h3v1h-3zM641 361h1V397h-1zM640 390h3v1h-3zM645 361h1V385h-1zM644 367h3V385h-3zM649 332h1V373h-1zM648 337h3V373h-3zM653 326h1V373h-1zM652 343h3V373h-3zM657 349h1V379h-1zM656 372h3V379h-3zM661 349h1V368h-1zM660 355h3V368h-3zM665 349h1V379h-1zM664 349h3V379h-3zM669 355h1V373h-1zM668 367h3v1h-3zM673 332h1V368h-1zM672 343h3V362h-3zM677 343h1V373h-1zM676 349h3V373h-3zM681 361h1V403h-1zM680 367h3V397h-3zM685 390h1V426h-1zM684 402h3v1h-3zM689 390h1V420h-1zM688 408h3v1h-3zM693 396h1V432h-1zM692 413h3V420h-3zM697 396h1V426h-1zM696 396h3V426h-3zM701 396h1V414h-1zM700 402h3V414h-3zM705 384h1V420h-1zM704 384h3V420h-3zM709 367h1V391h-1zM708 378h3v1h-3zM713 378h1V397h-1zM712 384h3v1h-3zM717 378h1V403h-1zM716 390h3V397h-3zM721 378h1V403h-1zM720 378h3V403h-3zM725 384h1V403h-1zM724 384h3V403h-3zM729 396h1V420h-1zM728 408h3V420h-3zM733 413h1V426h-1zM732 413h3V420h-3zM737 419h1V438h-1zM736 419h3V426h-3zM741 378h1V420h-1zM740 390h3V414h-3zM745 372h1V409h-1zM744 378h3V397h-3zM749 367h1V391h-1zM748 372h3V391h-3zM753 390h1V432h-1zM752 396h3V414h-3zM757 378h1V426h-1zM756 390h3V420h-3zM761 378h1V403h-1zM760 384h3v1h-3zM765 367h1V409h-1zM764 378h3V403h-3zM769 384h1V409h-1zM768 390h3V409h-3zM773 378h1V409h-1zM772 396h3V409h-3zM777 378h1V409h-1zM776 378h3V403h-3zM781 378h1V391h-1zM780 384h3v1h-3zM785 332h1V391h-1zM784 343h3V391h-3zM789 261h1V344h-1zM788 285h3V338h-3zM793 261h1V292h-1zM792 285h3V292h-3zM797 285h1V321h-1zM796 291h3V309h-3zM801 291h1V327h-1zM800 291h3V315h-3zM805 261h1V303h-1zM804 267h3V297h-3zM809 255h1V303h-1zM808 261h3V297h-3zM813 285h1V338h-1zM812 302h3V327h-3zM817 302h1V338h-1zM816 314h3V321h-3zM821 279h1V321h-1zM820 285h3V309h-3zM825 197h1V321h-1zM824 232h3V280h-3zM829 168h1V233h-1zM828 209h3V227h-3zM833 185h1V216h-1zM832 191h3V204h-3zM837 150h1V192h-1zM836 168h3V186h-3zM841 150h1V180h-1zM840 174h3v1h-3zM845 168h1V210h-1zM844 168h3V198h-3zM849 191h1V227h-1zM848 197h3v1h-3zM853 185h1V216h-1zM852 191h3V204h-3zM857 185h1V210h-1zM856 185h3V204h-3zM861 191h1V198h-1zM860 191h3V198h-3zM865 197h1V198h-1zM864 197h3v1h-3zM869 191h1V210h-1zM868 203h3V210h-3zM873 203h1V221h-1zM872 203h3V210h-3zM877 203h1V221h-1zM876 203h3V221h-3zM881 209h1V233h-1zM880 215h3v1h-3zM885 203h1V256h-1zM884 209h3V251h-3zM889 220h1V256h-1zM888 226h3V256h-3zM893 215h1V239h-1zM892 232h3v1h-3zM897 232h1V256h-1zM896 238h3V251h-3zM901 244h1V262h-1zM900 250h3V256h-3zM905 250h1V274h-1zM904 255h3V268h-3zM909 273h1V292h-1zM908 273h3V292h-3zM913 250h1V292h-1zM912 261h3V286h-3zM917 261h1V280h-1zM916 267h3v1h-3zM921 255h1V280h-1zM920 273h3v1h-3zM925 261h1V274h-1zM924 267h3v1h-3zM929 261h1V286h-1zM928 273h3v1h-3zM933 261h1V280h-1zM932 261h3V280h-3zM937 255h1V268h-1zM936 267h3v1h-3zM941 267h1V286h-1zM940 273h3V286h-3zM945 273h1V286h-1zM944 273h3V280h-3zM949 255h1V274h-1zM948 255h3V268h-3zM953 261h1V286h-1zM952 261h3V280h-3zM957 279h1V297h-1zM956 279h3V286h-3zM961 273h1V297h-1zM960 285h3v1h-3zM965 273h1V327h-1zM964 279h3V327h-3zM969 302h1V327h-1zM968 320h3V327h-3zM973 314h1V333h-1zM972 320h3V333h-3zM977 308h1V327h-1zM976 314h3V327h-3zM981 320h1V333h-1zM980 320h3V327h-3zM985 314h1V327h-1zM984 320h3v1h-3zM989 296h1V321h-1zM988 296h3V315h-3zM993 285h1V303h-1zM992 291h3V297h-3zM997 267h1V303h-1zM996 267h3V292h-3zM1001 255h1V280h-1zM1000 273h3V280h-3zM1005 273h1V297h-1zM1004 273h3V297h-3zM1009 273h1V297h-1zM1008 291h3v1h-3zM1013 285h1V309h-1zM1012 285h3V303h-3zM1017 296h1V315h-1zM1016 308h3v1h-3zM1021 302h1V321h-1zM1020 302h3V321h-3zM1025 302h1V327h-1zM1024 308h3V327h-3zM1029 302h1V315h-1zM1028 302h3V309h-3zM1033 296h1V321h-1zM1032 296h3V315h-3zM1037 296h1V315h-1zM1036 302h3V309h-3zM1041 302h1V327h-1zM1040 302h3V321h-3zM1045 308h1V321h-1zM1044 314h3v1h-3zM1049 302h1V315h-1zM1048 308h3V315h-3zM1053 302h1V321h-1zM1052 314h3V321h-3zM1057 320h1V327h-1zM1056 320h3V327h-3zM1061 314h1V327h-1zM1060 314h3V321h-3zM1065 314h1V333h-1zM1064 320h3v1h-3zM1069 320h1V362h-1zM1068 326h3V344h-3zM1073 332h1V385h-1zM1072 337h3V373h-3zM1077 355h1V373h-1zM1076 367h3v1h-3zM1081 367h1V373h-1zM1080 372h3v1h-3zM1085 361h1V391h-1zM1084 367h3V385h-3zM1089 372h1V391h-1zM1088 378h3V391h-3zM1093 361h1V385h-1zM1092 361h3V385h-3zM1097 337h1V368h-1zM1096 355h3V368h-3zM1101 326h1V350h-1zM1100 326h3V350h-3zM1105 326h1V344h-1zM1104 332h3v1h-3zM1109 314h1V338h-1zM1108 326h3V333h-3zM1113 326h1V344h-1zM1112 332h3V338h-3z"/>
<path fill="#fff" d="M61 549h1V554h-1zM73 531h1V542h-1zM81 526h1V530h-1zM93 555h1V560h-1zM101 561h1V566h-1zM113 578h1V595h-1zM137 625h1V636h-1zM145 607h1V624h-1zM153 602h1V606h-1zM157 596h1V606h-1zM161 590h1V601h-1zM169 578h1V589h-1zM177 572h1V589h-1zM181 572h1V577h-1zM185 561h1V577h-1zM193 561h1V566h-1zM197 561h1V566h-1zM209 555h1V571h-1zM217 549h1V554h-1zM221 543h1V554h-1zM229 520h1V530h-1zM233 508h1V525h-1zM237 496h1V501h-1zM265 526h1V530h-1zM277 520h1V525h-1zM293 502h1V519h-1zM297 467h1V495h-1zM305 461h1V466h-1zM325 490h1V501h-1zM329 490h1V495h-1zM333 485h1V495h-1zM357 526h1V536h-1zM369 531h1V548h-1zM377 485h1V536h-1zM385 450h1V489h-1zM393 461h1V489h-1zM397 455h1V466h-1zM413 508h1V519h-1zM417 479h1V501h-1zM433 496h1V513h-1zM445 526h1V542h-1zM457 531h1V536h-1zM465 502h1V530h-1zM469 485h1V507h-1zM477 485h1V495h-1zM489 490h1V525h-1zM493 485h1V495h-1zM509 467h1V478h-1zM513 426h1V472h-1zM529 455h1V466h-1zM537 438h1V449h-1zM541 426h1V431h-1zM557 426h1V449h-1zM561 362h1V431h-1zM565 327h1V355h-1zM601 414h1V419h-1zM613 414h1V431h-1zM621 385h1V402h-1zM645 368h1V384h-1zM649 338h1V372h-1zM657 373h1V378h-1zM661 356h1V367h-1zM673 344h1V361h-1zM697 397h1V425h-1zM705 385h1V419h-1zM721 379h1V402h-1zM737 420h1V425h-1zM741 391h1V413h-1zM745 379h1V396h-1zM757 391h1V419h-1zM769 391h1V408h-1zM777 379h1V402h-1zM785 344h1V390h-1zM789 286h1V337h-1zM793 286h1V291h-1zM801 292h1V314h-1zM805 268h1V296h-1zM817 315h1V320h-1zM821 286h1V308h-1zM825 233h1V279h-1zM829 210h1V226h-1zM833 192h1V203h-1zM837 169h1V185h-1zM853 192h1V203h-1zM861 192h1V197h-1zM889 227h1V255h-1zM901 251h1V255h-1zM913 262h1V285h-1zM933 262h1V279h-1zM945 274h1V279h-1zM949 256h1V267h-1zM957 280h1V285h-1zM973 321h1V332h-1zM989 297h1V314h-1zM997 268h1V291h-1zM1025 309h1V326h-1zM1033 297h1V314h-1zM1053 315h1V320h-1zM1061 315h1V320h-1zM1089 379h1V390h-1zM1093 362h1V384h-1zM1097 356h1V367h-1zM1101 327h1V349h-1zM1113 333h1V337h-1z"/>
</g>
<g stroke="#B24DD3" stroke-width="3" fill="none" stroke-linecap="butt">
<path d="M5 456.7L1188.5 96.8"/>
<path d="M5 538.8L1398 184.6"/>
<path d="M132.5 642.3L1398 275.6"/>
<path d="M841 150.2L1398 516"/>
<path d="M5 630L352 683"/>
<path d="M5 749L1398 757.5"/>
</g>
<polyline points="5.0,748.5 12.5,748.5 17.5,754.5 22.5,754.5 26.2,751.5 32.5,749.5 37.5,749.5 42.5,751.5 50.0,751.0 56.2,754.0 61.2,746.0 67.5,740.2 75.0,733.5 80.5,731.5 85.0,744.0 90.0,749.5 95.0,750.2 102.5,752.8 108.8,766.5 113.8,752.8 117.5,749.5 121.2,752.8 126.2,751.5 133.8,764.5 141.2,762.8 145.0,753.5 150.0,751.5 155.0,747.0 161.2,744.0 166.2,740.2 172.5,741.0 177.5,737.0 181.2,736.5 185.0,732.0 193.8,731.5 201.2,729.8 205.0,742.0 210.0,731.5 217.5,729.5 225.0,726.5 231.2,717.8 237.0,715.8 241.2,722.8 248.8,724.8 253.8,732.0 261.2,737.8 267.5,731.5 271.2,730.2 277.0,729.8 281.2,737.8 288.8,734.0 296.2,715.2 303.8,714.0 308.8,724.0 312.5,727.8 317.0,727.8 321.2,733.5 327.5,731.5 332.5,730.2 337.5,746.5 340.0,751.0 347.5,751.5 352.5,753.5 357.0,745.2 360.0,755.2 363.8,755.2 370.0,744.0 373.8,743.5 377.5,729.5 381.2,732.8 385.0,724.5 390.0,734.0 393.8,729.0 397.5,729.0 401.2,739.5 405.0,739.5 409.5,745.2 417.5,736.0 421.2,739.5 425.0,739.5 428.8,742.0 433.8,739.5 438.8,746.5 442.5,747.8 446.2,745.2 452.5,748.5 456.2,746.0 461.2,746.5 466.2,737.0 470.0,734.0 477.5,735.2 481.2,742.8 485.0,743.5 488.8,737.0 495.0,734.0 506.2,735.2 513.8,722.8 517.5,723.5 521.2,731.5 525.0,734.0 532.5,731.5 540.0,726.0 545.0,729.5 548.8,729.5 553.8,732.0 557.5,726.5 562.5,714.0 565.0,711.5 569.5,722.8 573.8,722.8 580.0,724.5 585.0,736.5 588.8,737.0 593.8,741.0 597.5,741.0 601.2,738.5 606.2,744.0 610.0,744.0 615.0,737.8 621.2,731.0 626.2,731.0 633.8,737.0 637.5,735.2 641.2,734.5 648.8,722.8 653.0,732.8 656.2,732.8 661.2,730.2 665.0,736.5 668.8,735.2 672.5,729.5 680.0,741.5 685.0,744.0 692.5,747.8 697.5,741.5 701.2,744.5 706.2,737.8 712.5,737.8 717.5,742.0 720.0,737.8 725.0,744.0 728.8,746.5 736.2,746.5 741.2,738.5 745.0,736.5 748.8,739.0 753.8,745.2 757.5,739.0 761.2,737.8 765.0,742.0 768.8,740.2 772.5,744.0 777.5,736.5 781.2,737.0 788.8,720.2 793.8,721.0 797.5,727.0 805.0,722.0 812.5,735.2 816.2,734.0 825.0,722.0 832.5,716.5 837.5,715.2 841.2,717.0 845.0,722.8 852.5,722.8 857.5,724.5 862.5,724.0 868.8,727.8 872.5,728.5 877.5,731.5 881.2,732.0 885.0,741.0 889.5,736.0 892.5,736.5 897.5,741.0 901.2,741.0 908.8,751.0 913.0,744.0 917.5,744.0 922.5,745.2 930.0,744.5 933.8,742.8 937.5,744.0 941.2,747.8 948.8,740.2 952.5,745.2 960.0,747.0 963.8,755.2 967.5,757.0 972.5,756.0 985.0,755.2 989.5,744.5 993.8,743.5 997.5,735.2 1005.0,743.5 1010.0,742.8 1016.2,746.5 1021.2,751.0 1025.0,746.5 1028.8,746.0 1033.0,742.8 1041.2,749.0 1046.2,746.5 1052.5,747.0 1057.5,751.0 1061.2,745.2 1065.0,747.8 1067.5,751.5 1072.5,762.0 1077.5,759.5 1085.0,763.5 1088.8,760.2 1092.5,752.8 1097.5,749.5 1101.2,738.5 1113.8,739.5" fill="none" stroke="#2A8AE6" stroke-width="1.8" stroke-linejoin="round"/>
<path d="M5 749L1398 757.5" stroke="#B24DD3" stroke-width="3" fill="none"/>
<g shape-rendering="crispEdges" fill="none" stroke="#000">
<path d="M4.5 96V796M4 96.5H1399M1398.5 96V796M4 683.5H1399M4 685.5H1399M4 795.5H1399"/>
<path d="M1399 127.5H1402"/>
<path d="M1399 185.5H1402"/>
<path d="M1399 244.5H1402"/>
<path d="M1399 302.5H1402"/>
<path d="M1399 361.5H1402"/>
<path d="M1399 419.5H1402"/>
<path d="M1399 478.5H1402"/>
<path d="M1399 536.5H1402"/>
<path d="M1399 595.5H1402"/>
<path d="M1399 653.5H1402"/>
<path d="M1399 685.5H1401"/>
<path d="M1399 719.5H1401"/>
<path d="M1399 762.5H1401"/>
<path d="M1399 795.5H1401"/>
<path d="M5.5 796V799"/>
<path d="M69.5 796V799"/>
<path d="M133.5 796V799"/>
<path d="M197.5 796V799"/>
<path d="M261.5 796V799"/>
<path d="M325.5 796V799"/>
<path d="M389.5 796V799"/>
<path d="M453.5 796V799"/>
<path d="M517.5 796V799"/>
<path d="M581.5 796V799"/>
<path d="M645.5 796V799"/>
<path d="M709.5 796V799"/>
<path d="M773.5 796V799"/>
<path d="M837.5 796V799"/>
<path d="M901.5 796V799"/>
<path d="M965.5 796V799"/>
<path d="M1029.5 796V799"/>
<path d="M1093.5 796V799"/>
</g>
<path d="M1113 97h9l-4.5 5z" fill="#C0C0C0"/>
<g fill="#000" stroke="#000" stroke-width="0.25">
<text x="1404.6" y="130.4" font-size="9.3" textLength="26.4" lengthAdjust="spacingAndGlyphs">1.2805</text>
<text x="1404.6" y="188.4" font-size="9.3" textLength="26.4" lengthAdjust="spacingAndGlyphs">1.2795</text>
<text x="1404.6" y="247.4" font-size="9.3" textLength="26.4" lengthAdjust="spacingAndGlyphs">1.2785</text>
<text x="1404.6" y="305.4" font-size="9.3" textLength="26.4" lengthAdjust="spacingAndGlyphs">1.2775</text>
<text x="1404.6" y="364.4" font-size="9.3" textLength="26.4" lengthAdjust="spacingAndGlyphs">1.2765</text>
<text x="1404.6" y="422.4" font-size="9.3" textLength="26.4" lengthAdjust="spacingAndGlyphs">1.2755</text>
<text x="1404.6" y="481.4" font-size="9.3" textLength="26.4" lengthAdjust="spacingAndGlyphs">1.2745</text>
<text x="1404.6" y="539.4" font-size="9.3" textLength="26.4" lengthAdjust="spacingAndGlyphs">1.2735</text>
<text x="1404.6" y="598.4" font-size="9.3" textLength="26.4" lengthAdjust="spacingAndGlyphs">1.2725</text>
<text x="1404.6" y="656.4" font-size="9.3" textLength="26.4" lengthAdjust="spacingAndGlyphs">1.2715</text>
<rect x="1401" y="325" width="34" height="11" fill="#000"/>
<g stroke="#fff"><text x="1404.6" y="334" font-size="9.3" textLength="26.4" lengthAdjust="spacingAndGlyphs" fill="#fff">1.2770</text></g>
<text x="1402.6" y="696" font-size="9.3" textLength="13.4" lengthAdjust="spacingAndGlyphs">100</text><text x="1401" y="721.8" font-size="9.3" textLength="9" lengthAdjust="spacingAndGlyphs">70</text><text x="1401" y="765" font-size="9.3" textLength="9" lengthAdjust="spacingAndGlyphs">30</text><text x="1401.8" y="791.5" font-size="9.3" textLength="4.2" lengthAdjust="spacingAndGlyphs">0</text>
<text x="8.3" y="107.8" font-size="9.3" textLength="55" lengthAdjust="spacingAndGlyphs">EURUSD,M5</text>
<text x="70.0" y="107.8" font-size="9.3" textLength="26.4" lengthAdjust="spacingAndGlyphs">1.2769</text>
<text x="101.4" y="107.8" font-size="9.3" textLength="26.4" lengthAdjust="spacingAndGlyphs">1.2771</text>
<text x="132.8" y="107.8" font-size="9.3" textLength="26.4" lengthAdjust="spacingAndGlyphs">1.2768</text>
<text x="164.2" y="107.8" font-size="9.3" textLength="26.4" lengthAdjust="spacingAndGlyphs">1.2770</text>
<text x="10" y="340.8" font-size="9.3" textLength="65" lengthAdjust="spacingAndGlyphs">#38470663 buy</text>
<text x="8.3" y="698.8" font-size="9.3" textLength="68" lengthAdjust="spacingAndGlyphs">RSI(14) 50.0207</text>
<text x="4.6" y="807.8" font-size="9.3" textLength="52.5" lengthAdjust="spacingAndGlyphs">14 Nov 2012</text>
<text x="68.4" y="807.8" font-size="9.3" textLength="55.6" lengthAdjust="spacingAndGlyphs">15 Nov 00:05</text>
<text x="132.4" y="807.8" font-size="9.3" textLength="55.6" lengthAdjust="spacingAndGlyphs">15 Nov 01:30</text>
<text x="196.4" y="807.8" font-size="9.3" textLength="55.6" lengthAdjust="spacingAndGlyphs">15 Nov 02:50</text>
<text x="260.4" y="807.8" font-size="9.3" textLength="55.6" lengthAdjust="spacingAndGlyphs">15 Nov 04:15</text>
<text x="324.4" y="807.8" font-size="9.3" textLength="55.6" lengthAdjust="spacingAndGlyphs">15 Nov 05:35</text>
<text x="388.4" y="807.8" font-size="9.3" textLength="55.6" lengthAdjust="spacingAndGlyphs">15 Nov 06:55</text>
<text x="452.4" y="807.8" font-size="9.3" textLength="55.6" lengthAdjust="spacingAndGlyphs">15 Nov 08:15</text>
<text x="516.4" y="807.8" font-size="9.3" textLength="55.6" lengthAdjust="spacingAndGlyphs">15 Nov 09:35</text>
<text x="580.4" y="807.8" font-size="9.3" textLength="55.6" lengthAdjust="spacingAndGlyphs">15 Nov 10:55</text>
<text x="644.4" y="807.8" font-size="9.3" textLength="55.6" lengthAdjust="spacingAndGlyphs">15 Nov 12:15</text>
<text x="708.4" y="807.8" font-size="9.3" textLength="55.6" lengthAdjust="spacingAndGlyphs">15 Nov 13:35</text>
<text x="772.4" y="807.8" font-size="9.3" textLength="55.6" lengthAdjust="spacingAndGlyphs">15 Nov 14:55</text>
<text x="836.4" y="807.8" font-size="9.3" textLength="55.6" lengthAdjust="spacingAndGlyphs">15 Nov 16:15</text>
<text x="900.4" y="807.8" font-size="9.3" textLength="55.6" lengthAdjust="spacingAndGlyphs">15 Nov 17:35</text>
<text x="964.4" y="807.8" font-size="9.3" textLength="55.6" lengthAdjust="spacingAndGlyphs">15 Nov 18:55</text>
<text x="1028.4" y="807.8" font-size="9.3" textLength="55.6" lengthAdjust="spacingAndGlyphs">15 Nov 20:15</text>
<text x="1092.4" y="807.8" font-size="9.3" textLength="55.6" lengthAdjust="spacingAndGlyphs">15 Nov 21:35</text>
</g>
</svg>
<div class="abs" style="left:0;top:815px;width:1439px;height:1px;background:#404040"></div>
<div class="abs" style="left:0;top:816px;width:1439px;height:20px;background:#D4D0C8"></div>
<div class="tsep" style="left:84px"></div>
<div class="tsep" style="left:164px"></div>
<div class="tsep" style="left:244px"></div>
<div class="tsep" style="left:320px"></div>
<div class="tsep" style="left:400px"></div>
<div class="abs" style="left:480px;top:815px;width:78px;height:18px;background:#fff;border:1px solid #000;border-top:none"></div>
<div class="abs" style="left:0;top:816px;width:1px;height:19px;background:#808080"></div><div class="abs" style="left:1px;top:816px;width:1px;height:19px;background:#404040"></div>
<svg width="1439" height="899"><text x="14" y="828" font-size="11" textLength="58" lengthAdjust="spacingAndGlyphs" fill="#444">EURUSD,M5</text><text x="95" y="828" font-size="11" textLength="56" lengthAdjust="spacingAndGlyphs" fill="#444">GBPUSD,M5</text><text x="174" y="828" font-size="11" textLength="58.5" lengthAdjust="spacingAndGlyphs" fill="#444">USDCHF,M5</text><text x="253.5" y="828" font-size="11" textLength="54" lengthAdjust="spacingAndGlyphs" fill="#444">USDJPY,M5</text><text x="329" y="828" font-size="11" textLength="59" lengthAdjust="spacingAndGlyphs" fill="#444">USDCAD,M5</text><text x="409" y="828" font-size="11" textLength="59" lengthAdjust="spacingAndGlyphs" fill="#444">AUDUSD,M5</text><text x="490.5" y="828" font-size="11" textLength="57.8" lengthAdjust="spacingAndGlyphs" fill="#000">EURUSD,M5</text><path d="M1415.5 822v6l-3-3z M1429.5 822v6l3-3z" fill="#A8A49C"/><text x="1.8" y="850.5" font-size="11" textLength="141.5" lengthAdjust="spacingAndGlyphs">Para obtener ayuda, pulse F1</text><text x="724" y="850.5" font-size="11" textLength="35" lengthAdjust="spacingAndGlyphs">Default</text><text x="1347" y="850.5" font-size="11" textLength="53.4" lengthAdjust="spacingAndGlyphs">7136/20 kb</text></svg>
<div class="abs" style="left:0;top:835px;width:1439px;height:1px;background:#fff"></div>
<div class="ssep" style="left:719px"></div>
<div class="ssep" style="left:829px"></div>
<div class="ssep" style="left:930px"></div>
<div class="ssep" style="left:1002px"></div>
<div class="ssep" style="left:1073px"></div>
<div class="ssep" style="left:1142px"></div>
<div class="ssep" style="left:1213px"></div>
<div class="ssep" style="left:1279px"></div>
<svg width="1439" height="899" viewBox="0 0 1439 899"><rect x="1284" y="841" width="2" height="12" fill="#B02020"/><rect x="1284" y="841" width="2" height="9" fill="#4E8A1E"/><rect x="1284" y="851" width="2" height="2" fill="#B02020"/><rect x="1287" y="841" width="2" height="12" fill="#B02020"/><rect x="1287" y="841" width="2" height="8" fill="#4E8A1E"/><rect x="1287" y="851" width="2" height="2" fill="#B02020"/><rect x="1290" y="841" width="2" height="12" fill="#B02020"/><rect x="1290" y="841" width="2" height="7" fill="#4E8A1E"/><rect x="1290" y="851" width="2" height="2" fill="#B02020"/><rect x="1293" y="841" width="2" height="12" fill="#B02020"/><rect x="1293" y="841" width="2" height="6" fill="#4E8A1E"/><rect x="1293" y="851" width="2" height="2" fill="#B02020"/><rect x="1296" y="841" width="2" height="12" fill="#B02020"/><rect x="1296" y="841" width="2" height="5" fill="#4E8A1E"/><rect x="1296" y="851" width="2" height="2" fill="#B02020"/><rect x="1299" y="841" width="2" height="12" fill="#B02020"/><rect x="1299" y="841" width="2" height="4" fill="#4E8A1E"/><rect x="1299" y="851" width="2" height="2" fill="#B02020"/><rect x="1302" y="841" width="2" height="12" fill="#B02020"/><rect x="1302" y="841" width="2" height="3" fill="#4E8A1E"/><rect x="1302" y="851" width="2" height="2" fill="#B02020"/><rect x="1305" y="841" width="2" height="12" fill="#B02020"/><rect x="1305" y="841" width="2" height="2" fill="#4E8A1E"/><rect x="1305" y="851" width="2" height="2" fill="#B02020"/></svg>
<div class="abs" style="left:0;top:857px;width:1439px;height:1px;background:#fff"></div>
<svg width="1439" height="899" viewBox="0 0 1439 899"><defs><linearGradient id="hexg" x1="0" y1="0" x2="0" y2="1"><stop offset="0" stop-color="#FFD23A"/><stop offset="1" stop-color="#F09A12"/></linearGradient><linearGradient id="lin" x1="0" y1="0" x2="1" y2="1"><stop offset="0" stop-color="#8A4A44"/><stop offset=".5" stop-color="#54221E"/><stop offset="1" stop-color="#341210"/></linearGradient><linearGradient id="fold" x1="0" y1="0" x2="0" y2="1"><stop offset="0" stop-color="#FBE9A6"/><stop offset="1" stop-color="#F2CE62"/></linearGradient><linearGradient id="javag" x1="0" y1="0" x2="0" y2="1"><stop offset="0" stop-color="#FFFFFF"/><stop offset="1" stop-color="#D5DAE2"/></linearGradient><linearGradient id="npad" x1="0" y1="0" x2="1" y2="1"><stop offset="0" stop-color="#BFE6F2"/><stop offset="1" stop-color="#58B4CF"/></linearGradient><radialGradient id="sky" cx=".4" cy=".3" r=".8"><stop offset="0" stop-color="#4FC3F7"/><stop offset="1" stop-color="#0E9AE0"/></radialGradient></defs><path d="M2.5 896V860.5H55" stroke="#fff" fill="none"/><path d="M55.5 860V896.5H2" stroke="#404040" fill="none"/><path d="M54.5 861V895.5H3" stroke="#808080" fill="none"/><path d="M5 872q3.500-2 6.500-.5l-1 6q-3-1.500-6.500.5z" fill="#E8552C"/><path d="M12.500 871.800q3.500 1.200 6.500-.8l-1 6q-3 2-6.500.8z" fill="#6CB82E"/><path d="M4 878.500q3.500-2 6.500-.5l-1 6q-3-1.500-6.500.5z" fill="#3B8DDC"/><path d="M11.500 878.300q3.500 1.200 6.500-.8l-1 6q-3 2-6.500.8z" fill="#F5C02A"/><text x="20.800" y="883" font-size="11.500" font-weight="bold" fill="#000" textLength="30.500" lengthAdjust="spacingAndGlyphs">Inicio</text><rect x="73" y="864" width="32" height="31" rx="2" fill="url(#lin)"/><rect x="86" y="865" width="2.500" height="29" fill="#C9B9A8" fill-opacity=".75"/><rect x="90.500" y="865" width="2.500" height="29" fill="#C9B9A8" fill-opacity=".75"/><text x="74.500" y="881.500" font-size="6.500" fill="#E6D9C8" font-family="Liberation Serif,serif" textLength="29" lengthAdjust="spacingAndGlyphs">LINEAGE</text><path d="M75 889q7 4 14 0q7 4 14 0" stroke="#D8C8B8" fill="none" stroke-width=".8"/><path d="M115.5 896V860.5H162" stroke="#fff" fill="none"/><path d="M162.5 860V896.5H115" stroke="#404040" fill="none"/><path d="M161.5 861V895.5H116" stroke="#808080" fill="none"/><circle cx="139" cy="879" r="14" fill="#F6C832"/><path d="M139 879L126.88 872A14 14 0 0 1 151.12 872z" fill="#DE3B2E"/><path d="M139 879L126.88 872A14 14 0 0 0 139 893z" fill="#3BA84A"/><path d="M133.5 872H151.12A14 14 0 0 0 126.88 872z" fill="#DE3B2E"/><circle cx="139" cy="879" r="6.300" fill="#fff"/><circle cx="139" cy="879" r="5" fill="#3F8AE0"/><path d="M165.5 896V860.5H212" stroke="#fff" fill="none"/><path d="M212.5 860V896.5H165" stroke="#404040" fill="none"/><path d="M211.5 861V895.5H166" stroke="#808080" fill="none"/><polygon points="189.0,871.5 185.2,878.0 177.8,878.0 174.0,871.5 177.8,865.0 185.2,865.0" fill="url(#hexg)" stroke="#C98A12" stroke-width="1"/><polygon points="203.0,878.5 199.2,885.0 191.8,885.0 188.0,878.5 191.8,872.0 199.2,872.0" fill="url(#hexg)" stroke="#C98A12" stroke-width="1"/><polygon points="189.0,886.0 185.2,892.5 177.8,892.5 174.0,886.0 177.8,879.5 185.2,879.5" fill="url(#hexg)" stroke="#C98A12" stroke-width="1"/><path d="M178.500 869l6 5M184.500 869l-6 5" stroke="#2A1A00" stroke-width="1.600"/><path d="M192 881l7-5" stroke="#2A1A00" stroke-width="1.600"/><path d="M179 889l5-5" stroke="#2A1A00" stroke-width="1.600"/><circle cx="179.500" cy="888.500" r="1.600" fill="#2A1A00"/><path d="M215.5 896V860.5H258" stroke="#fff" fill="none"/><path d="M258.5 860V896.5H215" stroke="#404040" fill="none"/><path d="M257.5 861V895.5H216" stroke="#808080" fill="none"/><path d="M261.0 861V896" stroke="#808080"/><path d="M262.0 860V897" stroke="#404040"/><path d="M222 868h9l2 2h19v22h-30z" fill="url(#fold)" stroke="#D9B44A" stroke-width=".8"/><rect x="225" y="866.500" width="3.500" height="3" fill="#3FA83A"/><rect x="233" y="868" width="3.500" height="3" fill="#D9663A"/><rect x="240.500" y="870.500" width="3.500" height="3" fill="#3FA8C8"/><path d="M225.500 882.500h22l1 11h-6v-5h-12v5h-6z" fill="#7CC4F2" stroke="#3A8AD0" stroke-width=".9"/><path d="M227 884h19" stroke="#CFE9FB" stroke-width="1.500"/><path d="M265.5 896V860.5H312" stroke="#fff" fill="none"/><path d="M312.5 860V896.5H265" stroke="#404040" fill="none"/><path d="M311.5 861V895.5H266" stroke="#808080" fill="none"/><rect x="274" y="864" width="30.500" height="30" rx="2.500" fill="#fff"/><path d="M276 873.5l3.500-4 2 2 4.500-6 3 3.500 3-4 2.500 3 2.500-3 5 6.500" stroke="#D9533A" stroke-width=".8" fill="none"/><path d="M276 875.9l3.500-4 2 2 4.500-6 3 3.500 3-4 2.500 3 2.500-3 5 6.500" stroke="#E58A3A" stroke-width=".8" fill="none"/><path d="M276 878.3l3.500-4 2 2 4.500-6 3 3.500 3-4 2.500 3 2.500-3 5 6.500" stroke="#D9B83A" stroke-width=".8" fill="none"/><path d="M276 880.7l3.500-4 2 2 4.500-6 3 3.500 3-4 2.500 3 2.500-3 5 6.500" stroke="#7DB548" stroke-width=".8" fill="none"/><text x="277.2" y="890" font-size="9.500" fill="#2A2A2A" textLength="23.500" lengthAdjust="spacingAndGlyphs">alpari</text><path d="M315.5 896V860.5H362" stroke="#fff" fill="none"/><path d="M362.5 860V896.5H315" stroke="#404040" fill="none"/><path d="M361.5 861V895.5H316" stroke="#808080" fill="none"/><rect x="323.5" y="864" width="30.500" height="30" rx="2.500" fill="#fff"/><path d="M325.5 873.5l3.500-4 2 2 4.500-6 3 3.500 3-4 2.500 3 2.500-3 5 6.500" stroke="#D9533A" stroke-width=".8" fill="none"/><path d="M325.5 875.9l3.500-4 2 2 4.500-6 3 3.500 3-4 2.500 3 2.500-3 5 6.500" stroke="#E58A3A" stroke-width=".8" fill="none"/><path d="M325.5 878.3l3.500-4 2 2 4.500-6 3 3.500 3-4 2.500 3 2.500-3 5 6.500" stroke="#D9B83A" stroke-width=".8" fill="none"/><path d="M325.5 880.7l3.500-4 2 2 4.500-6 3 3.500 3-4 2.500 3 2.500-3 5 6.500" stroke="#7DB548" stroke-width=".8" fill="none"/><text x="326.7" y="890" font-size="9.500" fill="#2A2A2A" textLength="23.500" lengthAdjust="spacingAndGlyphs">alpari</text><rect x="373.500" y="864" width="31" height="30.500" rx="5" fill="url(#javag)" stroke="#9AA3B0"/><path d="M390 867q-5 4-1 8t-1 7" stroke="#E8762C" stroke-width="1.800" fill="none"/><path d="M393.500 871q-3 3-1 5.500t0 5" stroke="#E8762C" stroke-width="1.300" fill="none"/><path d="M382 882q7 2.500 14 0M383 885.500q6 2.500 12 0M381 889q8 3.500 16 0" stroke="#5A7FA8" stroke-width="1.300" fill="none"/><path d="M396 882q4-1 3 2t-4 2.500" stroke="#5A7FA8" stroke-width="1.200" fill="none"/><path d="M415.5 896V860.5H462" stroke="#fff" fill="none"/><path d="M462.5 860V896.5H415" stroke="#404040" fill="none"/><path d="M461.5 861V895.5H416" stroke="#808080" fill="none"/><path d="M432 866l18 3-3 18-18-3z" fill="#8DB86A" stroke="#6A9A4A" stroke-width=".6"/><path d="M430 869l20 2-2 18-20-2z" fill="#E8A84A" stroke="#C9883A" stroke-width=".6"/><rect x="427" y="873" width="23" height="15" fill="#EAF3FC" stroke="#7AA6D8" stroke-width=".8"/><rect x="444" y="875" width="4" height="3" fill="#C8442A"/><rect x="432" y="881" width="9" height="5" fill="#fff"/><rect x="439.500" y="882.500" width="14" height="9.500" fill="#F7DA6A" stroke="#C9A63A" stroke-width=".8"/><path d="M439.500 882.500l7 5 7-5M439.500 892l5-4M453.500 892l-5-4" stroke="#C9A63A" stroke-width=".8" fill="none"/><path d="M465.5 896V860.5H504" stroke="#fff" fill="none"/><path d="M504.5 860V896.5H465" stroke="#404040" fill="none"/><path d="M503.5 861V895.5H466" stroke="#808080" fill="none"/><path d="M507.0 861V896" stroke="#808080"/><path d="M508.0 860V897" stroke="#404040"/><path d="M510.5 861V896" stroke="#808080"/><path d="M511.5 860V897" stroke="#404040"/><circle cx="479" cy="872.500" r="9" fill="url(#sky)"/><circle cx="492" cy="883.500" r="9" fill="url(#sky)"/><circle cx="485.500" cy="878" r="13.500" fill="url(#sky)"/><text x="477.500" y="887.500" font-size="25" font-weight="bold" fill="#fff">S</text><text x="524.500" y="889.500" font-size="32" font-weight="bold" fill="#000" stroke="#000" stroke-width="4.200" stroke-linejoin="round" textLength="30" lengthAdjust="spacingAndGlyphs">0:</text><text x="524.500" y="889.500" font-size="32" font-weight="bold" fill="#0F0" stroke="#0F0" stroke-width="1.800" stroke-linejoin="round" textLength="30" lengthAdjust="spacingAndGlyphs">0:</text><rect x="545.500" y="870.500" width="8" height="8" fill="#0F0" stroke="#000" stroke-width="1.200"/><rect x="545.500" y="882" width="8" height="8" fill="#0F0" stroke="#000" stroke-width="1.200"/><path d="M565.5 896V860.5H612" stroke="#fff" fill="none"/><path d="M612.5 860V896.5H565" stroke="#404040" fill="none"/><path d="M611.5 861V895.5H566" stroke="#808080" fill="none"/><path d="M574 873l5-3v16l8 3-6 2-7-3z" fill="#C8CCD2" stroke="#8A9098" stroke-width=".8"/><path d="M582 867l21 1.500-1 17-19-.5z" fill="#1E3A2A" stroke="#9AA3B0" stroke-width="1.200"/><path d="M585 878l2-5 2 6 2-8 2 7 2-5 2 6 2-4" stroke="#3FE05A" stroke-width="1" fill="none"/><path d="M590 886l6 0 1 4-8 0z" fill="#B8BEC6"/><ellipse cx="593.500" cy="891" rx="8" ry="2.200" fill="#C8CCD2" stroke="#9AA3B0" stroke-width=".6"/><rect x="615" y="860" width="47" height="37" fill="#fff"/><path d="M615.5 897V860.5H662" stroke="#404040" fill="none"/><path d="M616.5 896V861.5H661" stroke="#808080" fill="none"/><path d="M661.5 861V896.5H616" stroke="#fff" fill="none"/><path d="M623 871h14v4h-9v3h7v4h-7v6h-5z" fill="#5A5A5A"/><path d="M625 871h12v2h-12z" fill="#8A8A8A"/><path d="M636 874h5l3 3.500 3-3.500h6l-6 7 6 8h-6l-3-4-3 4h-6l6-8z" fill="#4A4A4A"/><path d="M636 874h5l3 3.500-2 2.500z" fill="#7A7A7A"/><path d="M638 864h11l-5.500 7z" fill="#E0243A"/><path d="M641 866l2.500 3 2.500-3" stroke="#fff" stroke-width=".8" fill="none"/><path d="M638 893h11l-5.500-7z" fill="#1FA84A"/><path d="M641 892l2.500-3 2.500 3" stroke="#fff" stroke-width=".8" fill="none"/><path d="M665.5 896V860.5H712" stroke="#fff" fill="none"/><path d="M712.5 860V896.5H665" stroke="#404040" fill="none"/><path d="M711.5 861V895.5H666" stroke="#808080" fill="none"/><path d="M680 868h16l8 17-4 7h-24l-3-5z" fill="#1A1A1A"/><path d="M680 868h16l5 11h-24z" fill="#2E2E2E"/><path d="M673 887l3 5h24l4-7" stroke="#4A4A4A" fill="none"/><text x="683.500" y="878.500" font-size="11" font-weight="bold" fill="#fff">G</text><path d="M715.5 896V860.5H758" stroke="#fff" fill="none"/><path d="M758.5 860V896.5H715" stroke="#404040" fill="none"/><path d="M757.5 861V895.5H716" stroke="#808080" fill="none"/><path d="M761.0 861V896" stroke="#808080"/><path d="M762.0 860V897" stroke="#404040"/><path d="M733 866l17 2-3 24-4 1z" fill="#E8DFC8" stroke="#B8A888" stroke-width=".6"/><path d="M731 866l17 1.500-6 25-19-4z" fill="url(#npad)" stroke="#4A9AB8" stroke-width=".6"/><path d="M732 865.500l16 1.500" stroke="#6A7A8A" stroke-width="1.600" stroke-dasharray="1 1"/><path d="M765.5 896V860.5H812" stroke="#fff" fill="none"/><path d="M812.5 860V896.5H765" stroke="#404040" fill="none"/><path d="M811.5 861V895.5H766" stroke="#808080" fill="none"/><rect x="773" y="863" width="32" height="31" fill="#fff"/><path d="M778.500 873.500A12.500 12.500 0 0 1 800 870.500L791 880h9.500A12.500 12.500 0 0 1 778 886.500L788 876.500z" fill="#0A6EBD"/><path d="M1256.500 897V860.500H1437" stroke="#808080" fill="none"/><path d="M1437.500 860V897.500H1256" stroke="#fff" fill="none"/><path d="M1263 877l2.800-2.800 2.800 2.800M1263 881l2.800-2.800 2.800 2.800" stroke="#000" stroke-width="1.300" fill="none"/><rect x="1284.500" y="874.500" width="10" height="8" fill="#A8ACB2" stroke="#6A6E74"/><path d="M1286 886.500h8M1290 883v3" stroke="#6A6E74"/><rect x="1280.500" y="873.500" width="4" height="5" fill="#E8E8E8" stroke="#555"/><path d="M1281.500 871v2M1283.500 871v2M1282.500 879v5h3" stroke="#555" fill="none"/><path d="M1304.500 872v15" stroke="#777" stroke-width="1.600"/><path d="M1305.500 873q3.500-2 6.500 0t6 0v7q-3 2-6 0t-6.500 0z" fill="#F2F2F2" stroke="#888" stroke-width=".8"/><circle cx="1314.500" cy="882.800" r="4.300" fill="#E02A2A" stroke="#A01010" stroke-width=".6"/><path d="M1312.500 880.800l4 4M1316.500 880.800l-4 4" stroke="#fff" stroke-width="1.400"/><path d="M1327.500 876.500h3l4-4v13l-4-4h-3z" fill="#F4F4F4" stroke="#777" stroke-width=".9"/><path d="M1336.500 875.500q2.500 3.500 0 7M1339 873.500q4 5.500 0 11" stroke="#888" fill="none" stroke-width="1.100"/><text x="1384" y="874.500" font-size="11.300" text-anchor="middle" fill="#000">22:01</text><text x="1385" y="890.300" font-size="11.300" text-anchor="middle" fill="#000">15/11/2012</text><rect x="1421" y="874" width="14" height="11" fill="#2F6FD8"/><path d="M1421 874h14v3.500q-7 2-14 0z" fill="#4A8AF0"/><rect x="1422" y="883" width="13" height="2" fill="#1A2A3A"/><rect x="1422" y="882" width="3" height="1" fill="#3FBF5A"/></svg>
</div></body></html>
